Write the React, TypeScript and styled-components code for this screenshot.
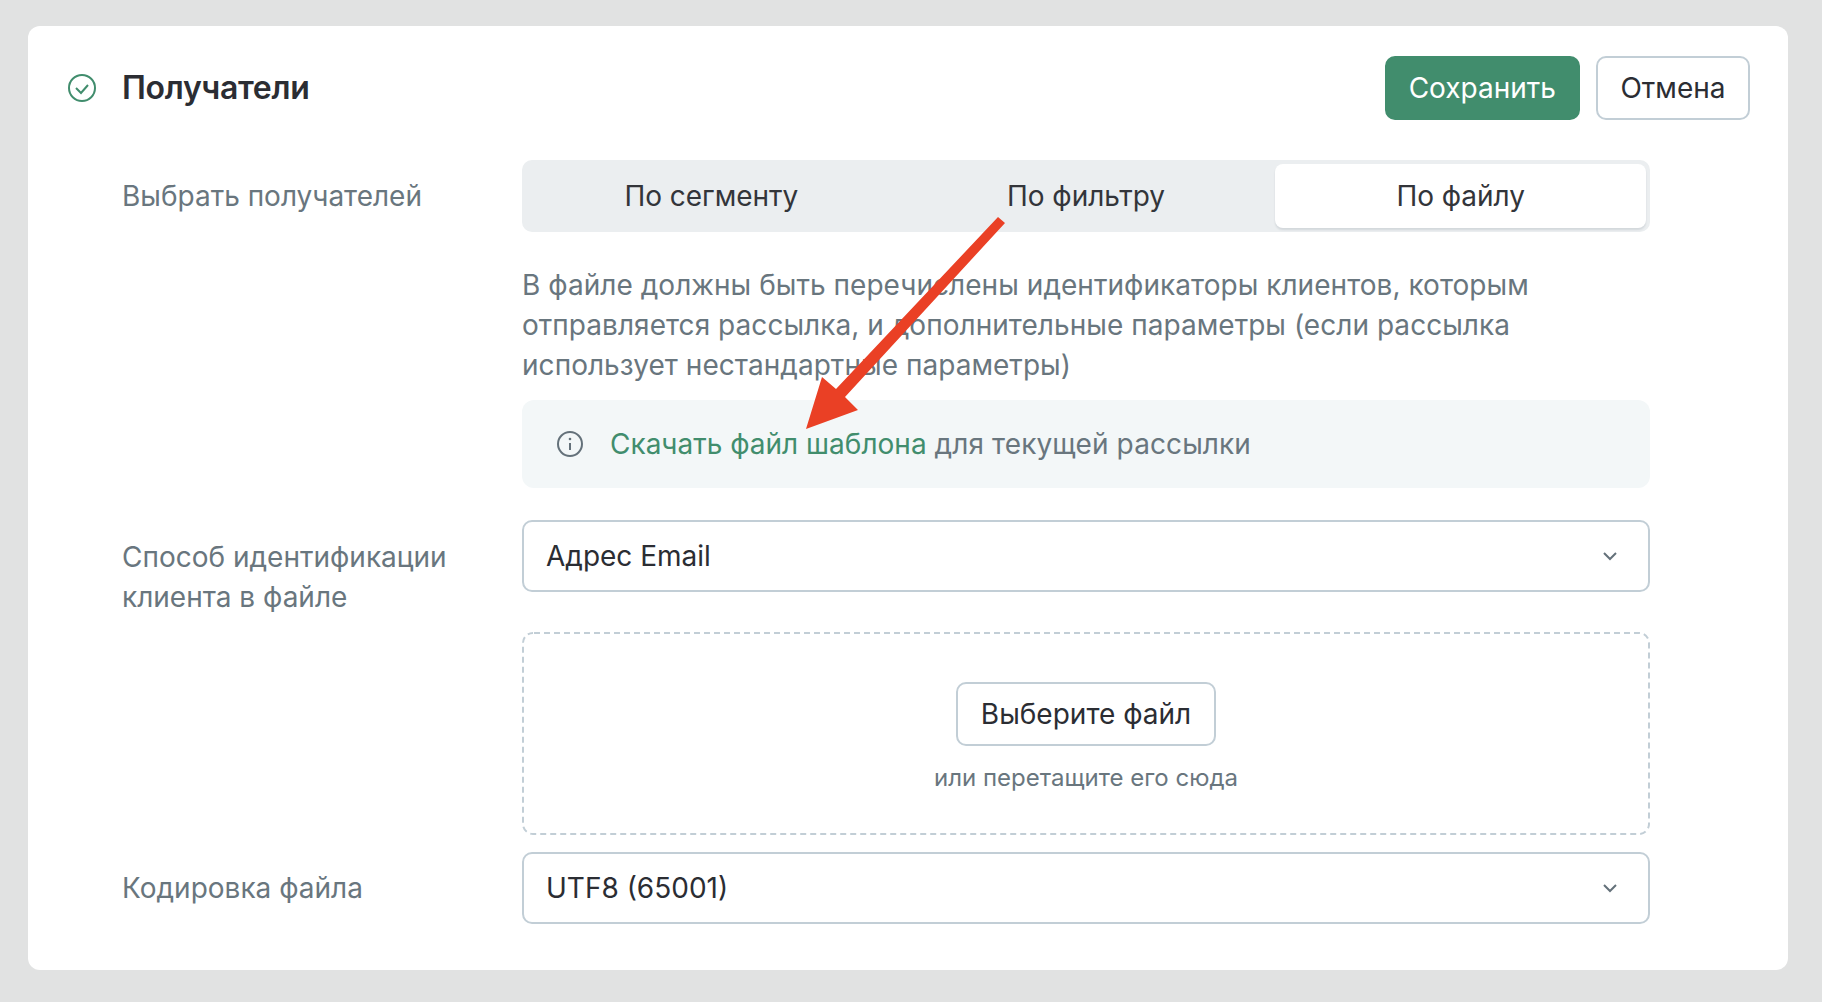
import React from "react";
import styled, { createGlobalStyle } from "styled-components";

const Global = createGlobalStyle`
  html, body { margin: 0; padding: 0; background: #e1e2e2; }
  body { font-family: Inter, "Liberation Sans", sans-serif; }
  * { box-sizing: border-box; }
`;

const Page = styled.div`
  height: 1002px;
  padding: 26px 34px 32px 28px;
  overflow: hidden;
`;

const Card = styled.section`
  position: relative;
  height: 944px;
  background: #fff;
  border-radius: 12px;
  padding: 30px 38px 0 40px;
`;

const Header = styled.header`
  display: flex;
  align-items: center;
  height: 64px;
`;

const StatusIcon = styled.svg`
  width: 28px;
  height: 28px;
  flex: none;
  margin-right: 26px;
`;

const Title = styled.h2`
  margin: 0;
  flex: 1;
  font-size: 32px;
  line-height: 40px;
  font-weight: 600;
  letter-spacing: -0.3px;
  color: #2b2d33;
`;

const Button = styled.button<{ $primary?: boolean }>`
  height: 64px;
  padding: 0 ${(p) => (p.$primary ? 22 : 22.5)}px;
  border-radius: 10px;
  border: 2px solid ${(p) => (p.$primary ? "#418d6d" : "#c2ced6")};
  background: ${(p) => (p.$primary ? "#418d6d" : "#fff")};
  color: ${(p) => (p.$primary ? "#fff" : "#2b2d33")};
  font-family: inherit;
  font-size: 28px;
  line-height: 40px;
  margin-left: ${(p) => (p.$primary ? 0 : 16)}px;
`;

const Form = styled.div`
  margin: 40px 100px 0 54px;
  display: grid;
  grid-template-columns: 400px 1128px;
`;

const Label = styled.div<{ $pad: number }>`
  font-size: 28px;
  line-height: 40px;
  color: #69767e;
  padding-top: ${(p) => p.$pad}px;
`;

const Field = styled.div`
  min-width: 0;
`;

const Tabs = styled.div`
  display: grid;
  grid-template-columns: repeat(3, 1fr);
  gap: 4px;
  height: 72px;
  padding: 4px;
  border-radius: 10px;
  background: #ebeef0;
`;

const Tab = styled.div<{ $active?: boolean }>`
  display: flex;
  align-items: center;
  justify-content: center;
  font-size: 28px;
  letter-spacing: -0.05px;
  color: #33353a;
  border-radius: 8px;
  background: ${(p) => (p.$active ? "#fff" : "transparent")};
  box-shadow: ${(p) => (p.$active ? "0 2px 2px rgba(40, 60, 70, 0.12)" : "none")};
`;

const Description = styled.p`
  margin: 33px 0 15px;
  font-size: 28px;
  line-height: 40px;
  letter-spacing: 0.04px;
  color: #69767e;
`;

const Info = styled.div`
  display: flex;
  align-items: center;
  height: 88px;
  padding-left: 35px;
  border-radius: 12px;
  background: #f3f7f8;
  font-size: 28px;
  letter-spacing: 0.1px;
  color: #69767e;
`;

const InfoIcon = styled.svg`
  width: 26px;
  height: 26px;
  flex: none;
  margin-right: 27px;
`;

const DownloadLink = styled.a`
  color: #418d6d;
  letter-spacing: 0;
  margin-right: 8px;
`;

const Select = styled.div<{ $top: number }>`
  display: flex;
  align-items: center;
  justify-content: space-between;
  height: 72px;
  margin-top: ${(p) => p.$top}px;
  padding: 0 30px 0 22px;
  border: 2px solid #c2ced6;
  border-radius: 10px;
  font-size: 28px;
  color: #2b2d33;
`;

const Chevron = styled.svg`
  width: 16px;
  height: 10px;
  flex: none;
`;

const Dropzone = styled.div`
  position: relative;
  display: flex;
  flex-direction: column;
  align-items: center;
  height: 203px;
  margin-top: 40px;
  padding-top: 50px;
`;

const DashedFrame = styled.svg`
  position: absolute;
  inset: 0;
  width: 100%;
  height: 100%;
  pointer-events: none;
`;

const Hint = styled.div`
  margin-top: 16px;
  font-size: 24px;
  line-height: 32px;
  color: #69767e;
`;

const FileButton = styled(Button)`
  margin-left: 0;
`;

const LastSelect = styled.div`
  margin-top: 17px;
`;

const ArrowOverlay = styled.svg`
  position: absolute;
  left: 0;
  top: 0;
  width: 1760px;
  height: 944px;
  pointer-events: none;
`;

const ChevronIcon = () => (
  <Chevron viewBox="0 0 16 10" fill="none">
    <path d="M2 2l6 6 6-6" stroke="#64717a" strokeWidth="2" />
  </Chevron>
);

export default function App() {
  return (
    <Page>
      <Global />
      <Card>
        <Header>
          <StatusIcon viewBox="0 0 28 28" fill="none">
            <circle cx="14" cy="14" r="13" stroke="#418d6d" strokeWidth="2" />
            <path d="M8 14l5 5 7-8" stroke="#418d6d" strokeWidth="2" />
          </StatusIcon>
          <Title>Получатели</Title>
          <Button $primary>Сохранить</Button>
          <Button>Отмена</Button>
        </Header>
        <Form>
          <Label $pad={16}>Выбрать получателей</Label>
          <Field>
            <Tabs>
              <Tab>По сегменту</Tab>
              <Tab>По фильтру</Tab>
              <Tab $active>По файлу</Tab>
            </Tabs>
            <Description>
              В файле должны быть перечислены идентификаторы клиентов, которым
              <br />
              отправляется рассылка, и дополнительные параметры (если рассылка
              <br />
              использует нестандартные параметры)
            </Description>
            <Info>
              <InfoIcon viewBox="0 0 26 26" fill="none">
                <circle cx="13" cy="13" r="12" stroke="#64717a" strokeWidth="2" />
                <path d="M13 12v7" stroke="#64717a" strokeWidth="2" />
                <circle cx="13" cy="8" r="1.3" fill="#64717a" />
              </InfoIcon>
              <DownloadLink>Скачать файл шаблона</DownloadLink> для текущей рассылки
            </Info>
          </Field>
          <Label $pad={49}>
            Способ идентификации
            <br />
            клиента в файле
          </Label>
          <Field>
            <Select $top={32}>
              Адрес Email
              <ChevronIcon />
            </Select>
            <Dropzone>
              <DashedFrame viewBox="0 0 1128 203" fill="none">
                <rect
                  x="1"
                  y="1"
                  width="1126"
                  height="201"
                  rx="10"
                  stroke="#c2ced6"
                  strokeWidth="2"
                  strokeDasharray="6 4"
                  strokeDashoffset="-1"
                />
              </DashedFrame>
              <FileButton>Выберите файл</FileButton>
              <Hint>или перетащите его сюда</Hint>
            </Dropzone>
          </Field>
          <Label $pad={33}>Кодировка файла</Label>
          <LastSelect>
            <Select $top={0}>
              UTF8 (65001)
              <ChevronIcon />
            </Select>
          </LastSelect>
        </Form>
        <ArrowOverlay viewBox="0 0 1760 944">
          <path
            d="M970 191L977 197L817 371L830 384L778 403L794 351L808 363Z"
            fill="#ea4025"
          />
        </ArrowOverlay>
      </Card>
    </Page>
  );
}
